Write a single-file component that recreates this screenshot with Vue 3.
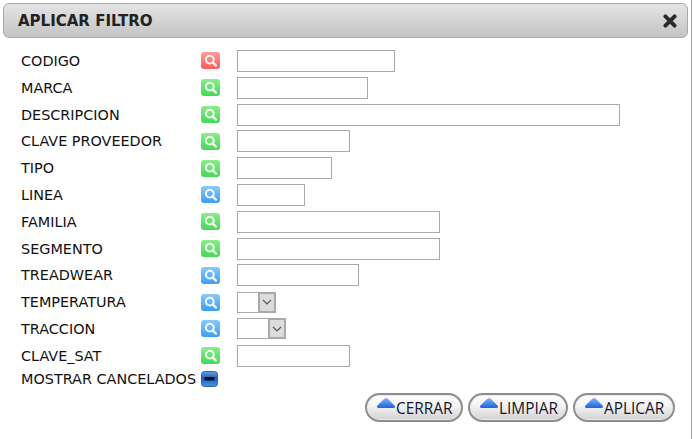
<template>
  <div class="dialog">
    <header class="title-bar">
      <span class="title">APLICAR FILTRO</span>
      <svg class="close" viewBox="0 0 14 14" aria-label="Cerrar">
        <path d="M2.4 2.4 11.6 11.6M11.6 2.4 2.4 11.6" stroke="#2b2b2b" stroke-width="3.9" stroke-linecap="round" />
      </svg>
    </header>

    <div class="fields">
      <div v-for="field in fields" :key="field.label" class="field-row">
        <label class="field-label">{{ field.label }}</label>
        <svg class="search-icon" viewBox="0 0 19 17">
          <defs>
            <linearGradient :id="'grad-' + field.color" x1="0" y1="0" x2="0" y2="1">
              <stop offset="0" :stop-color="palette[field.color][0]" />
              <stop offset="1" :stop-color="palette[field.color][1]" />
            </linearGradient>
          </defs>
          <rect width="19" height="17" rx="3" :fill="'url(#grad-' + field.color + ')'" />
          <circle cx="8.8" cy="7.6" r="3.9" fill="none" stroke="#fff" stroke-opacity="0.9" stroke-width="2" />
          <path d="M11.8 10.6 15 13.6" stroke="#fff" stroke-opacity="0.9" stroke-width="2.4" stroke-linecap="round" />
        </svg>
        <div v-if="field.select" class="select-box" :style="{ width: field.width + 'px' }">
          <select class="select-input"></select>
          <span class="select-arrow">
            <svg viewBox="0 0 10 6" width="10" height="6">
              <path d="M1 1 5 5 9 1" fill="none" stroke="#555" stroke-width="1.1" />
            </svg>
          </span>
        </div>
        <input v-else class="text-input" type="text" :style="{ width: field.width + 'px' }" />
      </div>

      <div class="field-row check-row">
        <label class="field-label">MOSTRAR CANCELADOS</label>
        <svg class="check-icon" viewBox="0 0 17 16">
          <defs>
            <linearGradient id="grad-check" x1="0" y1="0" x2="0" y2="1">
              <stop offset="0" stop-color="#6a9fe0" />
              <stop offset="0.45" stop-color="#1d5cc0" />
              <stop offset="1" stop-color="#3a9aee" />
            </linearGradient>
          </defs>
          <rect x="0.5" y="0.5" width="16" height="15" rx="3" fill="url(#grad-check)" stroke="#3a5f96" />
          <rect x="3.5" y="6" width="10" height="3.5" fill="#0b1220" />
        </svg>
      </div>
    </div>

    <footer class="actions">
      <button v-for="action in actions" :key="action.label" class="action" :style="{ width: action.width + 'px' }" type="button">
        <svg class="action-icon" viewBox="0 0 20 12">
          <defs>
            <linearGradient id="grad-arrow" x1="0" y1="0" x2="0" y2="1">
              <stop offset="0" stop-color="#7db6f7" />
              <stop offset="1" stop-color="#1d64dc" />
            </linearGradient>
          </defs>
          <path d="M10 1 C11 1 12 2 13 3 L18.5 8.5 C19.6 9.8 19 11 17.5 11 H2.5 C1 11 .4 9.8 1.5 8.5 L7 3 C8 2 9 1 10 1Z" fill="url(#grad-arrow)" />
        </svg>
        <span class="action-text">{{ action.label }}</span>
      </button>
    </footer>
  </div>
</template>

<script setup>
const palette = {
  red: ['#ff9c9c', '#ff5a5f'],
  green: ['#8cec8c', '#45d858'],
  blue: ['#8cc8fb', '#3b9ff0'],
}

const fields = [
  { label: 'CODIGO', color: 'red', width: 158 },
  { label: 'MARCA', color: 'green', width: 131 },
  { label: 'DESCRIPCION', color: 'green', width: 383 },
  { label: 'CLAVE PROVEEDOR', color: 'green', width: 113 },
  { label: 'TIPO', color: 'green', width: 95 },
  { label: 'LINEA', color: 'blue', width: 68 },
  { label: 'FAMILIA', color: 'green', width: 203 },
  { label: 'SEGMENTO', color: 'green', width: 203 },
  { label: 'TREADWEAR', color: 'blue', width: 122 },
  { label: 'TEMPERATURA', color: 'blue', width: 39, select: true },
  { label: 'TRACCION', color: 'blue', width: 49, select: true },
  { label: 'CLAVE_SAT', color: 'green', width: 113 },
]

const actions = [
  { label: 'CERRAR', width: 98 },
  { label: 'LIMPIAR', width: 100 },
  { label: 'APLICAR', width: 102 },
]
</script>

<style>
html,
body {
  margin: 0;
  background: #fff;
  overflow: hidden;
}
</style>

<style scoped>
.dialog {
  box-sizing: border-box;
  width: 692px;
  height: 439px;
  padding: 3px 3px 0;
  border-right: 1px solid #a8a8a8;
  font-family: "DejaVu Sans", Verdana, sans-serif;
  color: #111;
}

.title-bar {
  box-sizing: border-box;
  height: 35px;
  display: flex;
  align-items: center;
  justify-content: space-between;
  padding: 0 10px 0 14px;
  border: 1px solid #a9a9a9;
  border-radius: 6px;
  background: linear-gradient(#e4e4e4, #c4c4c4);
}

.title {
  font-size: 15px;
  font-weight: bold;
  color: #222;
}

.close {
  width: 14px;
  height: 14px;
}

.fields {
  padding: 9.6px 0 0 18px;
}

.field-row {
  display: flex;
  align-items: center;
  height: 26.8px;
}

.field-label {
  width: 180px;
  flex: none;
  font-size: 14.4px;
  white-space: nowrap;
}

.search-icon {
  width: 19px;
  height: 17px;
  flex: none;
  margin-right: 17px;
}

.text-input {
  box-sizing: border-box;
  height: 22px;
  padding: 0 2px;
  border: 1px solid #a9a9a9;
  background: #fff;
}

.select-box {
  position: relative;
  box-sizing: border-box;
  height: 21px;
}

.select-input {
  appearance: none;
  display: block;
  box-sizing: border-box;
  width: 100%;
  height: 100%;
  padding: 0;
  border: 1px solid #a9a9a9;
  border-radius: 0;
  background: #fff;
}

.select-arrow {
  position: absolute;
  top: 0;
  right: 0;
  bottom: 0;
  box-sizing: border-box;
  width: 18px;
  display: flex;
  align-items: center;
  justify-content: center;
  border: 2px solid #a9a9a9;
  background: #dcdcdc;
}

.check-row {
  height: 20px;
}

.check-icon {
  width: 17px;
  height: 16px;
  flex: none;
}

.actions {
  display: flex;
  justify-content: flex-end;
  gap: 5px;
  padding: 4px 13px 0 0;
}

.action {
  box-sizing: border-box;
  height: 29px;
  padding: 0 0 0 9px;
  display: flex;
  align-items: flex-start;
  border: 2px solid #8d8d8d;
  border-radius: 15px;
  background: linear-gradient(#fff 0%, #f2f2f2 45%, #d2d2d2 100%);
  box-shadow: inset 0 0 0 1px #ececec;
  font-family: "Open Sans", "Noto Sans", sans-serif;
  font-size: 15.4px;
  color: #16162a;
}

.action-icon {
  width: 20px;
  height: 12px;
  flex: none;
  margin-top: 2px;
}

.action-text {
  margin: 4px 0 0 0;
  line-height: 19px;
}
</style>
